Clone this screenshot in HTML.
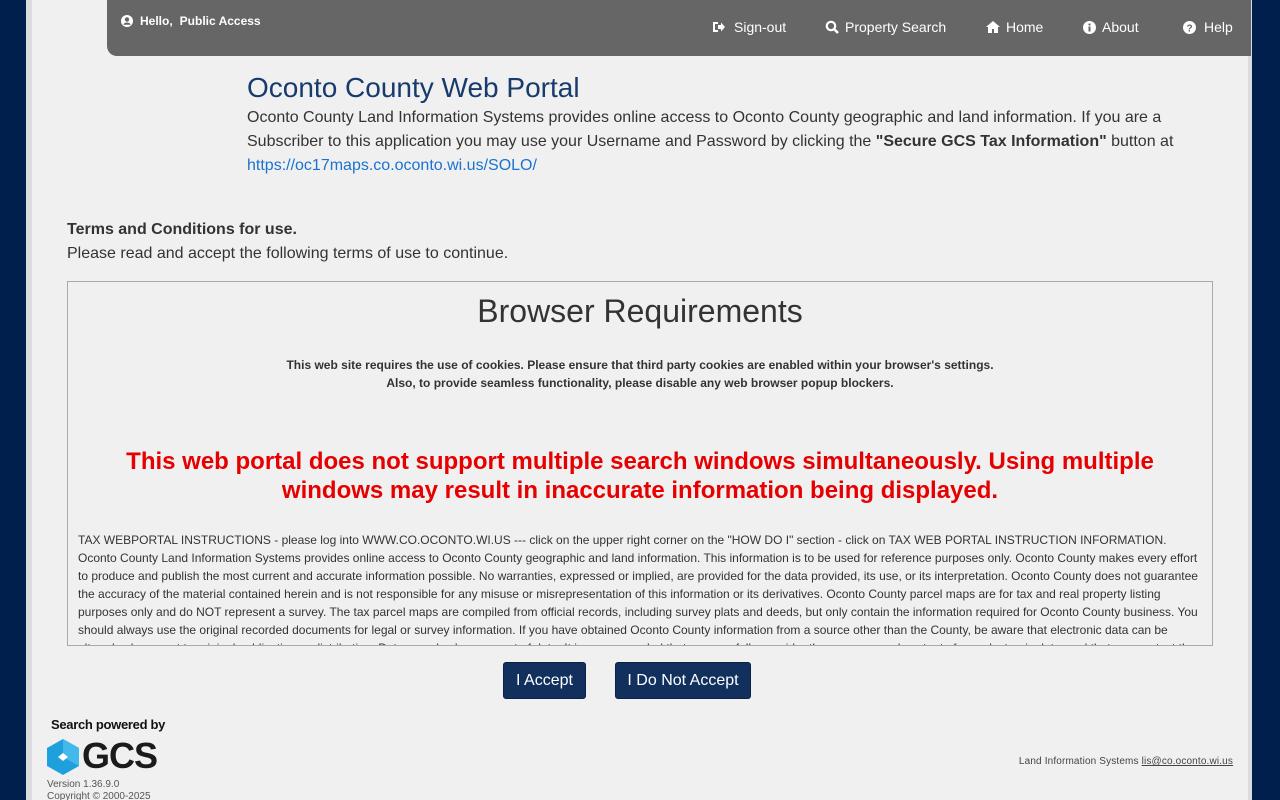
<!DOCTYPE html>
<html><head><meta charset="utf-8"><style>
*{margin:0;padding:0;box-sizing:border-box}
html,body{width:1280px;height:800px;overflow:hidden}
body{background:#001f4d;font-family:"Liberation Sans",Arial,sans-serif;color:#333;position:relative}
.page{position:absolute;left:26px;top:0;width:1226px;height:800px;background:#f0f0f0;border-left:6px solid #dcdcdc;border-right:4px solid #dcdcdc}
.bar{position:absolute;left:107px;top:0;width:1144px;height:56px;background:#666;border-radius:0 0 0 10px;color:#fff}
.hello{position:absolute;left:14px;top:14px;font-size:12px;display:flex;align-items:center}
.nav{position:absolute;top:19px;font-size:14px;display:flex;align-items:center;gap:6px}
h1{position:absolute;left:247px;top:72px;font-size:28px;font-weight:normal;color:#163b6c}
.intro{position:absolute;left:247px;top:106px;width:960px;font-size:16px;line-height:24px;color:#333}
.intro a{color:#1a73d0;text-decoration:none}
.terms{position:absolute;left:67px;top:218px;font-size:16px;line-height:24px}
.box{position:absolute;left:67px;top:281px;width:1146px;height:365px;border:1px solid #aaa;overflow:hidden;background:#f0f0f0}
.box h2{font-size:32px;font-weight:normal;text-align:center;margin-top:11px;color:#333}
.ck{text-align:center;font-size:12px;font-weight:bold;line-height:18px;margin-top:26px}
.red{text-align:center;color:#e60000;font-size:24px;font-weight:bold;line-height:29px;margin-top:55px}
.tx{font-size:12px;line-height:18px;padding:0 10px;margin-top:26px}
.btn{position:absolute;top:662px;height:37px;background:#11305e;color:#fff;font-size:16px;border-radius:3px;line-height:35px;text-align:center;border:1px solid #0a2248}
.foot{position:absolute;right:47px;top:756px;font-size:10px;color:#444;letter-spacing:0.15px}
</style></head><body>
<div class="page"></div>
<div class="bar">
 <div class="hello"><svg width="12" height="12" viewBox="0 0 12 12"><circle cx="6" cy="6" r="6" fill="#fff"/><circle cx="6" cy="4.5" r="2.2" fill="#666"/><path d="M2.3 9.8C3 8 4.5 7.5 6 7.5S9 8 9.7 9.8" fill="#666"/></svg><b style="margin-left:7px">Hello,</b><b style="margin-left:7px">Public Access</b></div>
 <div class="nav" style="left:605px"><svg width="14" height="12" viewBox="0 0 14 12"><path d="M1 1h5v2H3v6h3v2H1z" fill="#fff"/><path d="M6 4h3V1.5L13 6l-4 4.5V8H6z" fill="#fff"/></svg><span style="margin-left:2px">Sign-out</span></div>
 <div class="nav" style="left:718px"><svg width="14" height="14" viewBox="0 0 14 14"><circle cx="6" cy="6" r="4.2" fill="none" stroke="#fff" stroke-width="2.2"/><path d="M9 9l4 4" stroke="#fff" stroke-width="2.6"/></svg><span>Property Search</span></div>
 <div class="nav" style="left:879px"><svg width="14" height="12" viewBox="0 0 14 12"><path d="M7 0L0 6h2v6h4V8h2v4h4V6h2z" fill="#fff"/></svg><span>Home</span></div>
 <div class="nav" style="left:976px"><svg width="13" height="13" viewBox="0 0 13 13"><circle cx="6.5" cy="6.5" r="6.5" fill="#fff"/><rect x="5.5" y="5.5" width="2" height="5" fill="#666"/><circle cx="6.5" cy="3.5" r="1.1" fill="#666"/></svg><span>About</span></div>
 <div class="nav" style="left:1076px"><svg width="13" height="13" viewBox="0 0 13 13"><circle cx="6.5" cy="6.5" r="6.5" fill="#fff"/><text x="6.5" y="10.5" font-size="10" font-weight="bold" text-anchor="middle" fill="#666" font-family="Liberation Sans">?</text></svg><span style="margin-left:2px">Help</span></div>
</div>
<h1>Oconto County Web Portal</h1>
<div class="intro">Oconto County Land Information Systems provides online access to Oconto County geographic and land information. If you are a Subscriber to this application you may use your Username and Password by clicking the <b>"Secure GCS Tax Information"</b> button at <a>https://oc17maps.co.oconto.wi.us/SOLO/</a></div>
<div class="terms"><b>Terms and Conditions for use.</b><br>Please read and accept the following terms of use to continue.</div>
<div class="box">
<h2>Browser Requirements</h2>
<div class="ck">This web site requires the use of cookies. Please ensure that third party cookies are enabled within your browser's settings.<br>Also, to provide seamless functionality, please disable any web browser popup blockers.</div>
<div class="red">This web portal does not support multiple search windows simultaneously. Using multiple<br>windows may result in inaccurate information being displayed.</div>
<div class="tx">TAX WEBPORTAL INSTRUCTIONS - please log into WWW.CO.OCONTO.WI.US --- click on the upper right corner on the "HOW DO I" section - click on TAX WEB PORTAL INSTRUCTION INFORMATION. Oconto County Land Information Systems provides online access to Oconto County geographic and land information. This information is to be used for reference purposes only. Oconto County makes every effort to produce and publish the most current and accurate information possible. No warranties, expressed or implied, are provided for the data provided, its use, or its interpretation. Oconto County does not guarantee the accuracy of the material contained herein and is not responsible for any misuse or misrepresentation of this information or its derivatives. Oconto County parcel maps are for tax and real property listing purposes only and do NOT represent a survey. The tax parcel maps are compiled from official records, including survey plats and deeds, but only contain the information required for Oconto County business. You should always use the original recorded documents for legal or survey information. If you have obtained Oconto County information from a source other than the County, be aware that electronic data can be altered subsequent to original publication or distribution. Data can also become out of date. It is recommended that you carefully consider the accuracy and content of any electronic data, and that you contact the</div>
</div>
<div class="btn" style="left:503px;width:83px">I Accept</div>
<div class="btn" style="left:615px;width:136px">I Do Not Accept</div>
<div style="position:absolute;left:51px;top:717px;font-size:13px;font-weight:bold;color:#111;letter-spacing:-0.3px">Search powered by</div>
<svg style="position:absolute;left:46px;top:739px" width="34" height="36" viewBox="0 0 34 36"><path d="M17 0L33 9v18L17 36 1 27V9z" fill="#1ea0dc"/><path d="M17 0L33 9v18L17 18z" fill="#43b8ea"/><path d="M12 18l5-4 5 4-5 4z" fill="#fff"/></svg>
<div style="position:absolute;left:82px;top:736px;font-size:36px;line-height:40px;font-weight:bold;color:#1b1b1b;letter-spacing:-1px">GCS</div>
<div style="position:absolute;left:47px;top:779px;font-size:10px;color:#555;line-height:12px">Version 1.36.9.0<br>Copyright © 2000-2025</div>
<div class="foot">Land Information Systems <u>lis@co.oconto.wi.us</u></div>
</body></html>
